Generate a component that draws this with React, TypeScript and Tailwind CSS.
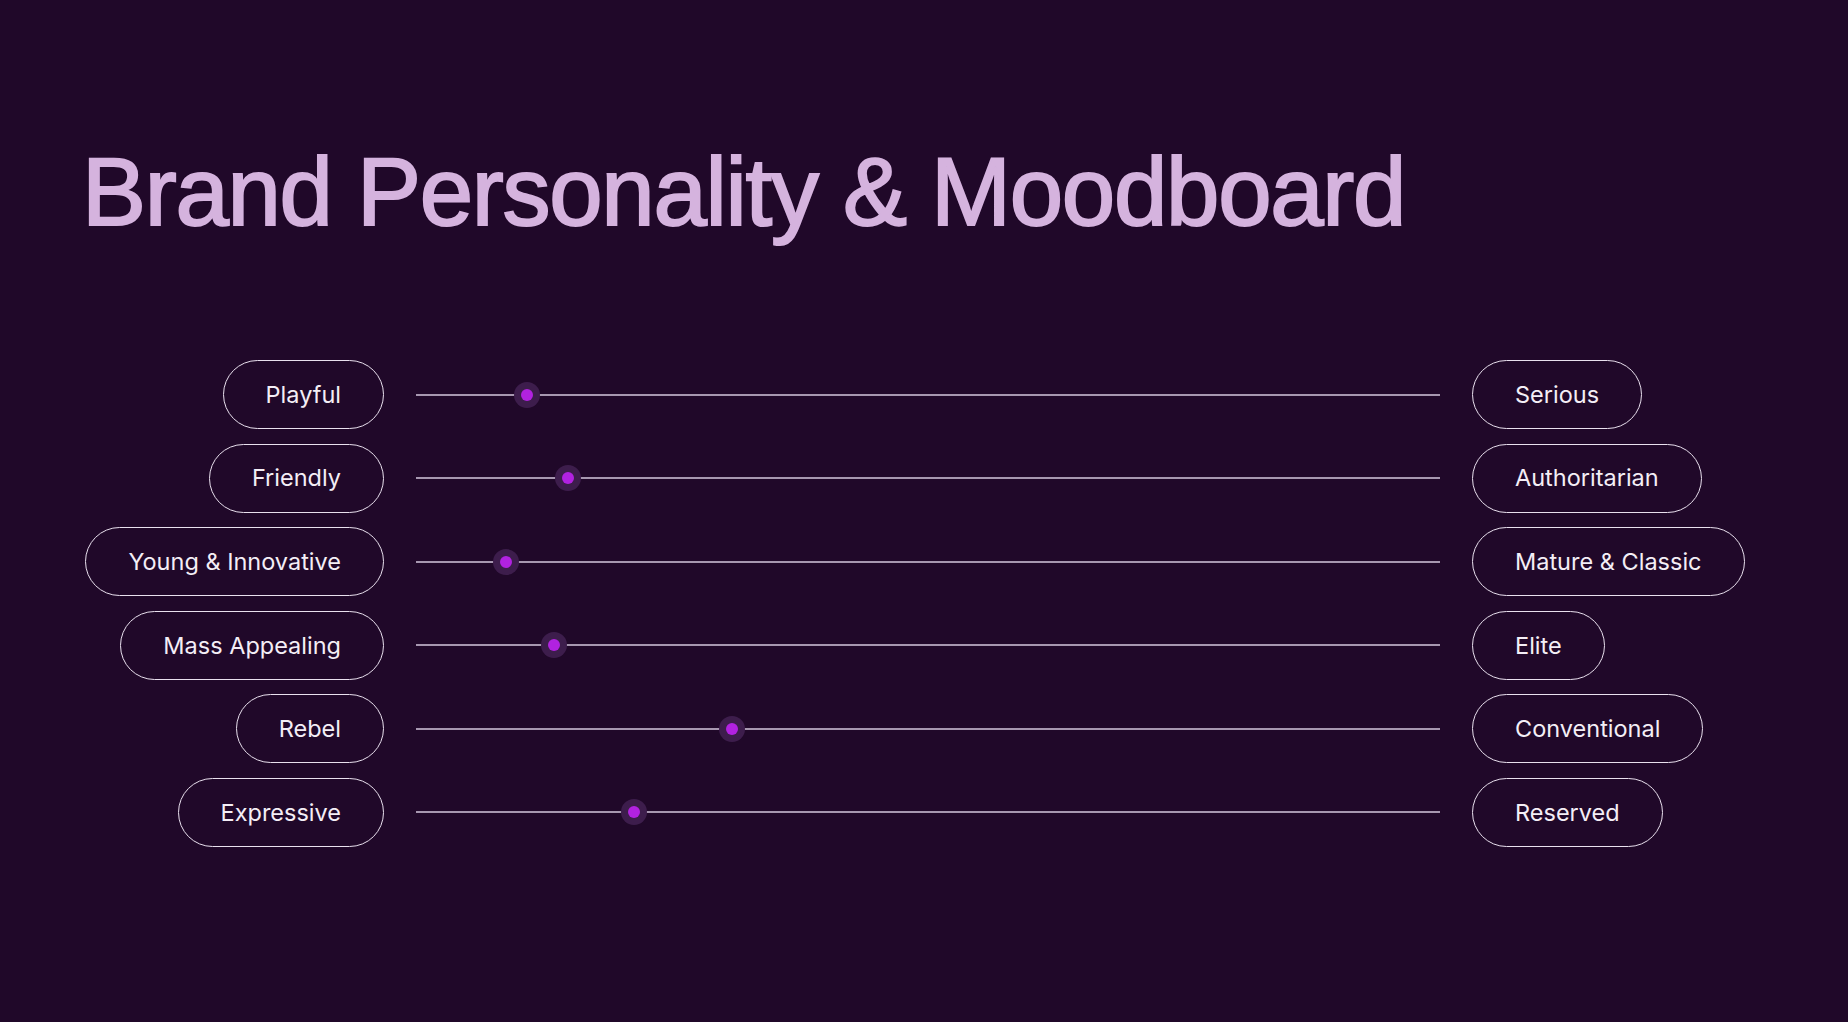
const traits = [
  { left: 'Playful', right: 'Serious', value: 0.108 },
  { left: 'Friendly', right: 'Authoritarian', value: 0.148 },
  { left: 'Young & Innovative', right: 'Mature & Classic', value: 0.088 },
  { left: 'Mass Appealing', right: 'Elite', value: 0.135 },
  { left: 'Rebel', right: 'Conventional', value: 0.309 },
  { left: 'Expressive', right: 'Reserved', value: 0.213 },
];

function Pill({ label }: { label: string }) {
  return (
    <div className="h-[69px] px-[42px] flex items-center rounded-full border-[1.5px] border-[#e9e0ee] text-[#f4eef6] text-[23.5px] font-['Inter',sans-serif] whitespace-nowrap">
      {label}
    </div>
  );
}

function Slider({ value }: { value: number }) {
  return (
    <div className="relative w-[1024px] h-[2px] bg-[#a797b0]">
      {/* knob: halo + dot */}
      <div
        className="absolute top-1/2 -translate-x-1/2 -translate-y-1/2 w-[26px] h-[26px] rounded-full bg-[#3d1d4c] flex items-center justify-center"
        style={{ left: `${value * 100}%` }}
      >
        <div className="w-[12px] h-[12px] rounded-full bg-[#b122e0]" />
      </div>
    </div>
  );
}

export default function App() {
  return (
    <div className="w-[1848px] h-[1022px] bg-[#200829] overflow-hidden">
      <h1 className="pt-[144px] pl-[82px] text-[96px] leading-none text-[#d5b3de] font-['Liberation_Sans',Arial,sans-serif] tracking-[-1.3px] [-webkit-text-stroke:2px_#d5b3de] whitespace-nowrap">
        Brand Personality &amp; Moodboard
      </h1>

      <div className="mt-[120px] flex flex-col gap-[14.6px]">
        {traits.map((t) => (
          <div key={t.left} className="flex items-center gap-[32px]">
            <div className="w-[384px] flex justify-end">
              <Pill label={t.left} />
            </div>
            <Slider value={t.value} />
            <Pill label={t.right} />
          </div>
        ))}
      </div>
    </div>
  );
}
